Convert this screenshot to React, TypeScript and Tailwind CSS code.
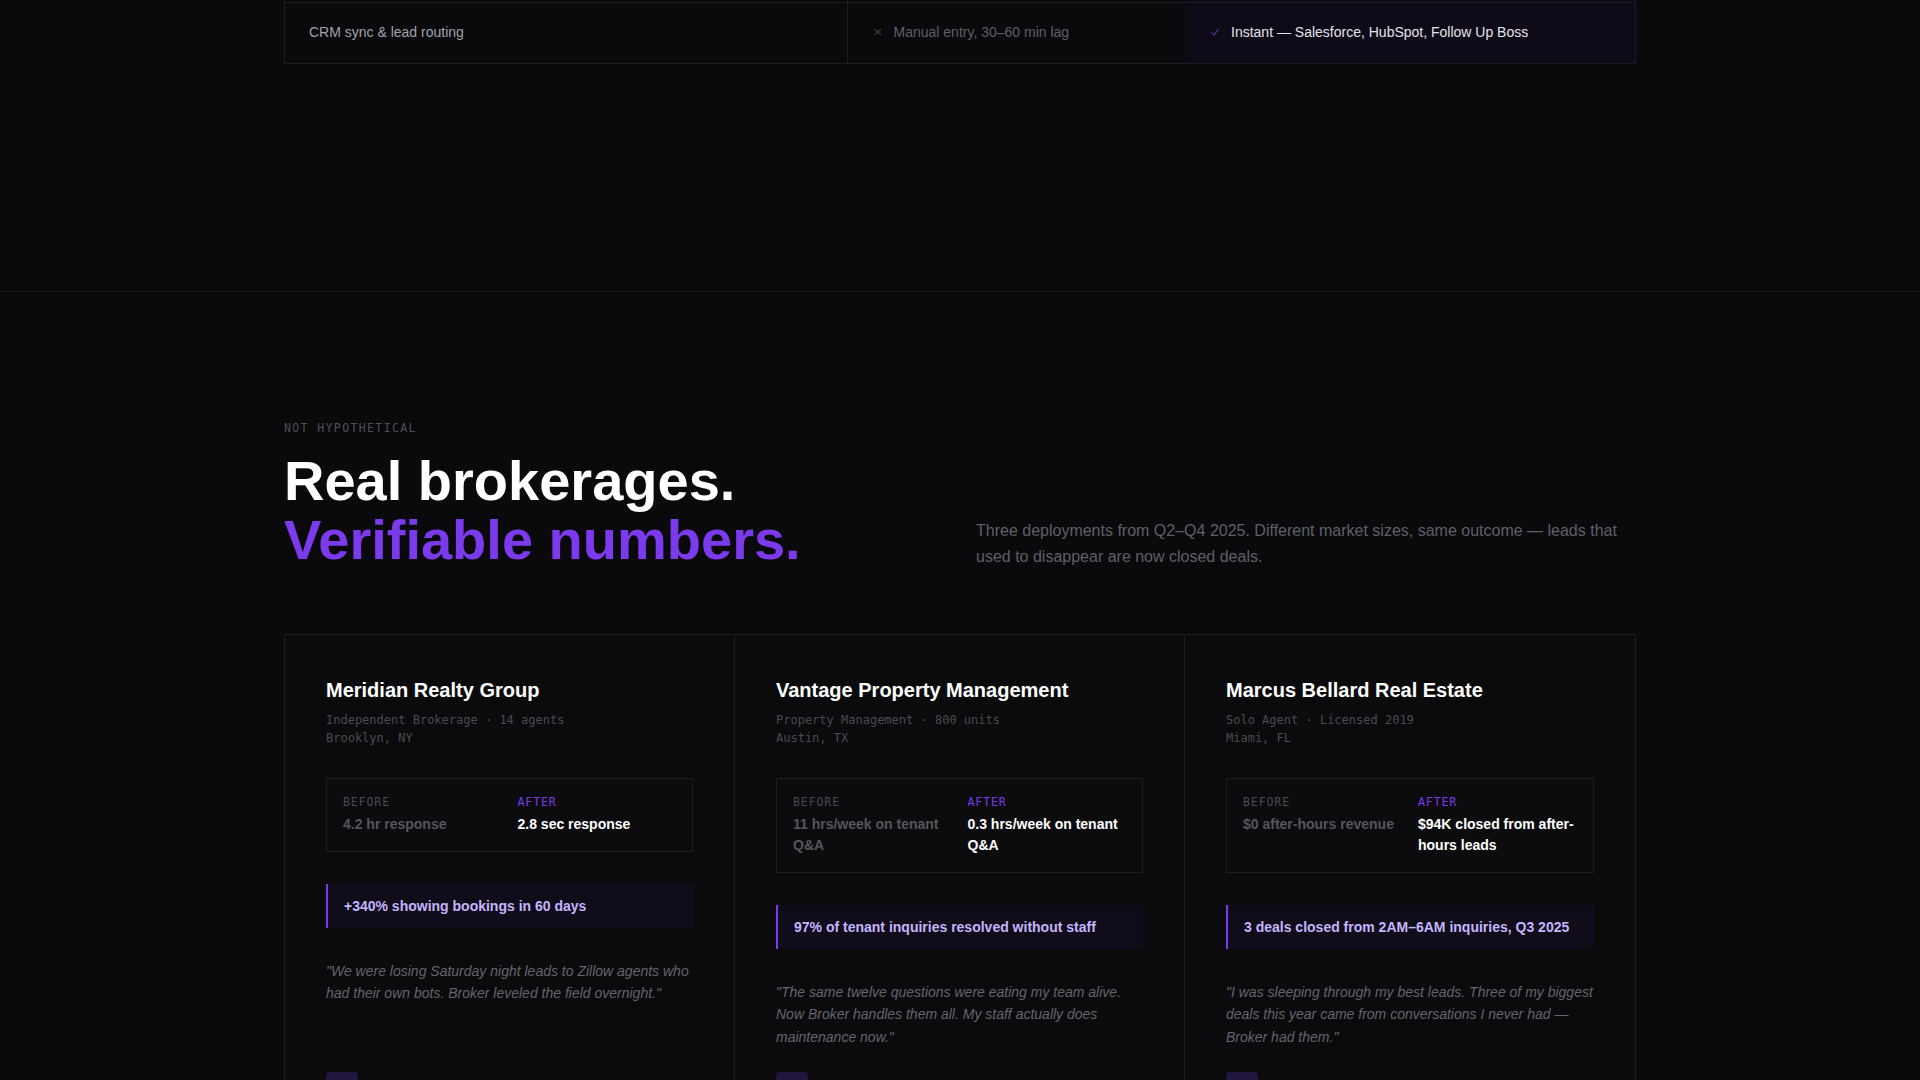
const sans = 'font-["Liberation_Sans",Arial,sans-serif]';
const mono = 'font-["DejaVu_Sans_Mono","Liberation_Mono",monospace]';

const cases = [
  {
    name: 'Meridian Realty Group',
    meta: 'Independent Brokerage · 14 agents',
    place: 'Brooklyn, NY',
    before: '4.2 hr response',
    after: '2.8 sec response',
    result: '+340% showing bookings in 60 days',
    quote: '"We were losing Saturday night leads to Zillow agents who had their own bots. Broker leveled the field overnight."',
  },
  {
    name: 'Vantage Property Management',
    meta: 'Property Management · 800 units',
    place: 'Austin, TX',
    before: '11 hrs/week on tenant Q&A',
    after: '0.3 hrs/week on tenant Q&A',
    result: '97% of tenant inquiries resolved without staff',
    quote: '"The same twelve questions were eating my team alive. Now Broker handles them all. My staff actually does maintenance now."',
  },
  {
    name: 'Marcus Bellard Real Estate',
    meta: 'Solo Agent · Licensed 2019',
    place: 'Miami, FL',
    before: '$0 after-hours revenue',
    after: '$94K closed from after-hours leads',
    result: '3 deals closed from 2AM–6AM inquiries, Q3 2025',
    quote: '"I was sleeping through my best leads. Three of my biggest deals this year came from conversations I never had — Broker had them."',
  },
];

function CrossIcon() {
  return (
    <svg className="h-3 w-3 shrink-0 text-[#3a3a42]" viewBox="0 0 12 12" fill="none" stroke="currentColor" strokeWidth="1.3">
      <path d="M3 3l6 6M9 3l-6 6" />
    </svg>
  );
}

function CheckIcon() {
  return (
    <svg className="h-3 w-3 shrink-0 text-[#4c2f8a]" viewBox="0 0 12 12" fill="none" stroke="currentColor" strokeWidth="1.3">
      <path d="M2.5 6.5l2.5 2.5 4.5-6" />
    </svg>
  );
}

function CaseCard({ c, last }: { c: (typeof cases)[number]; last: boolean }) {
  return (
    <div className={`flex flex-col px-[41px] pt-[41px] pb-10 ${last ? '' : 'border-r border-[#1c1c21]'}`}>
      <h3 className="text-[20px] leading-7 font-bold text-white">{c.name}</h3>
      <div className={`${mono} mt-[7px] text-[12px] leading-[18px] text-[#4a4a52]`}>
        <p>{c.meta}</p>
        <p>{c.place}</p>
      </div>

      <div className="mt-[31px] grid grid-cols-2 gap-4 border border-[#1c1c21] bg-[#0c0c0f] px-4 pt-[17px] pb-4">
        <div>
          <p className={`${mono} text-[11.5px] leading-3 tracking-[0.08em] text-[#4a4a52]`}>BEFORE</p>
          <p className="mt-1.5 text-[14px] leading-[21px] font-bold text-[#55555d]">{c.before}</p>
        </div>
        <div>
          <p className={`${mono} text-[11.5px] leading-3 tracking-[0.08em] text-[#7c3aed]`}>AFTER</p>
          <p className="mt-1.5 text-[14px] leading-[21px] font-bold text-white">{c.after}</p>
        </div>
      </div>

      <div className="mt-8 border-l-2 border-[#7c3aed] bg-[#100c1a] px-4 py-3">
        <p className="text-[14px] leading-5 font-bold text-[#c4b5fd]">{c.result}</p>
      </div>

      <p className="mt-8 flex-1 text-[14px] leading-[22.5px] italic text-[#64646d]">{c.quote}</p>

      {/* author avatar */}
      <div className="mt-6 h-8 w-8 rounded-sm bg-[#23163c]" />
    </div>
  );
}

export default function App() {
  return (
    <div className={`${sans} min-h-screen bg-[#0a0a0c] text-white`}>
      {/* tail of the comparison table */}
      <div className="pb-[227px]">
        <div className="mx-auto max-w-[1352px] border-x border-b border-[#1c1c21]">
          <div className="grid h-[2px] grid-cols-[5fr_3fr_4fr]">
            <div className="border-r border-[#1c1c21]" />
            <div />
            <div className="bg-[#0e0a18]" />
          </div>
          <div className="grid grid-cols-[5fr_3fr_4fr] border-t border-[#1c1c21] text-[14px] leading-5">
            <div className="border-r border-[#1c1c21] px-6 pt-[19px] pb-[21px] text-[#a1a1aa]">CRM sync &amp; lead routing</div>
            <div className="flex items-center gap-2.5 px-6 pt-[19px] pb-[21px] text-[#5f5f68]">
              <CrossIcon />
              Manual entry, 30–60 min lag
            </div>
            <div className="flex items-center gap-2.5 bg-[#0e0a18] px-6 pt-[19px] pb-[21px] text-[#e4e4e7]">
              <CheckIcon />
              Instant — Salesforce, HubSpot, Follow Up Boss
            </div>
          </div>
        </div>
      </div>

      <section className="border-t border-[#1a1a1e] pt-32 pb-24">
        <div className="mx-auto max-w-[1352px]">
          <p className={`${mono} text-[11.5px] leading-4 tracking-[0.12em] text-[#4f4f57]`}>NOT HYPOTHETICAL</p>

          <div className="mt-4 grid grid-cols-2 items-end gap-8">
            <h2 className="text-[56px] leading-[1.05] font-bold">
              <span className="block text-white">Real brokerages.</span>
              <span className="block text-[#7c3aed]">Verifiable numbers.</span>
            </h2>
            <p className="text-[16px] leading-[26px] text-[#5f5f68]">
              Three deployments from Q2–Q4 2025. Different market sizes, same outcome — leads that used to disappear
              are now closed deals.
            </p>
          </div>

          <div className="mt-16 grid grid-cols-3 border border-[#1c1c21] bg-[#0b0b0d]">
            {cases.map((c, i) => (
              <CaseCard key={c.name} c={c} last={i === cases.length - 1} />
            ))}
          </div>
        </div>
      </section>
    </div>
  );
}
